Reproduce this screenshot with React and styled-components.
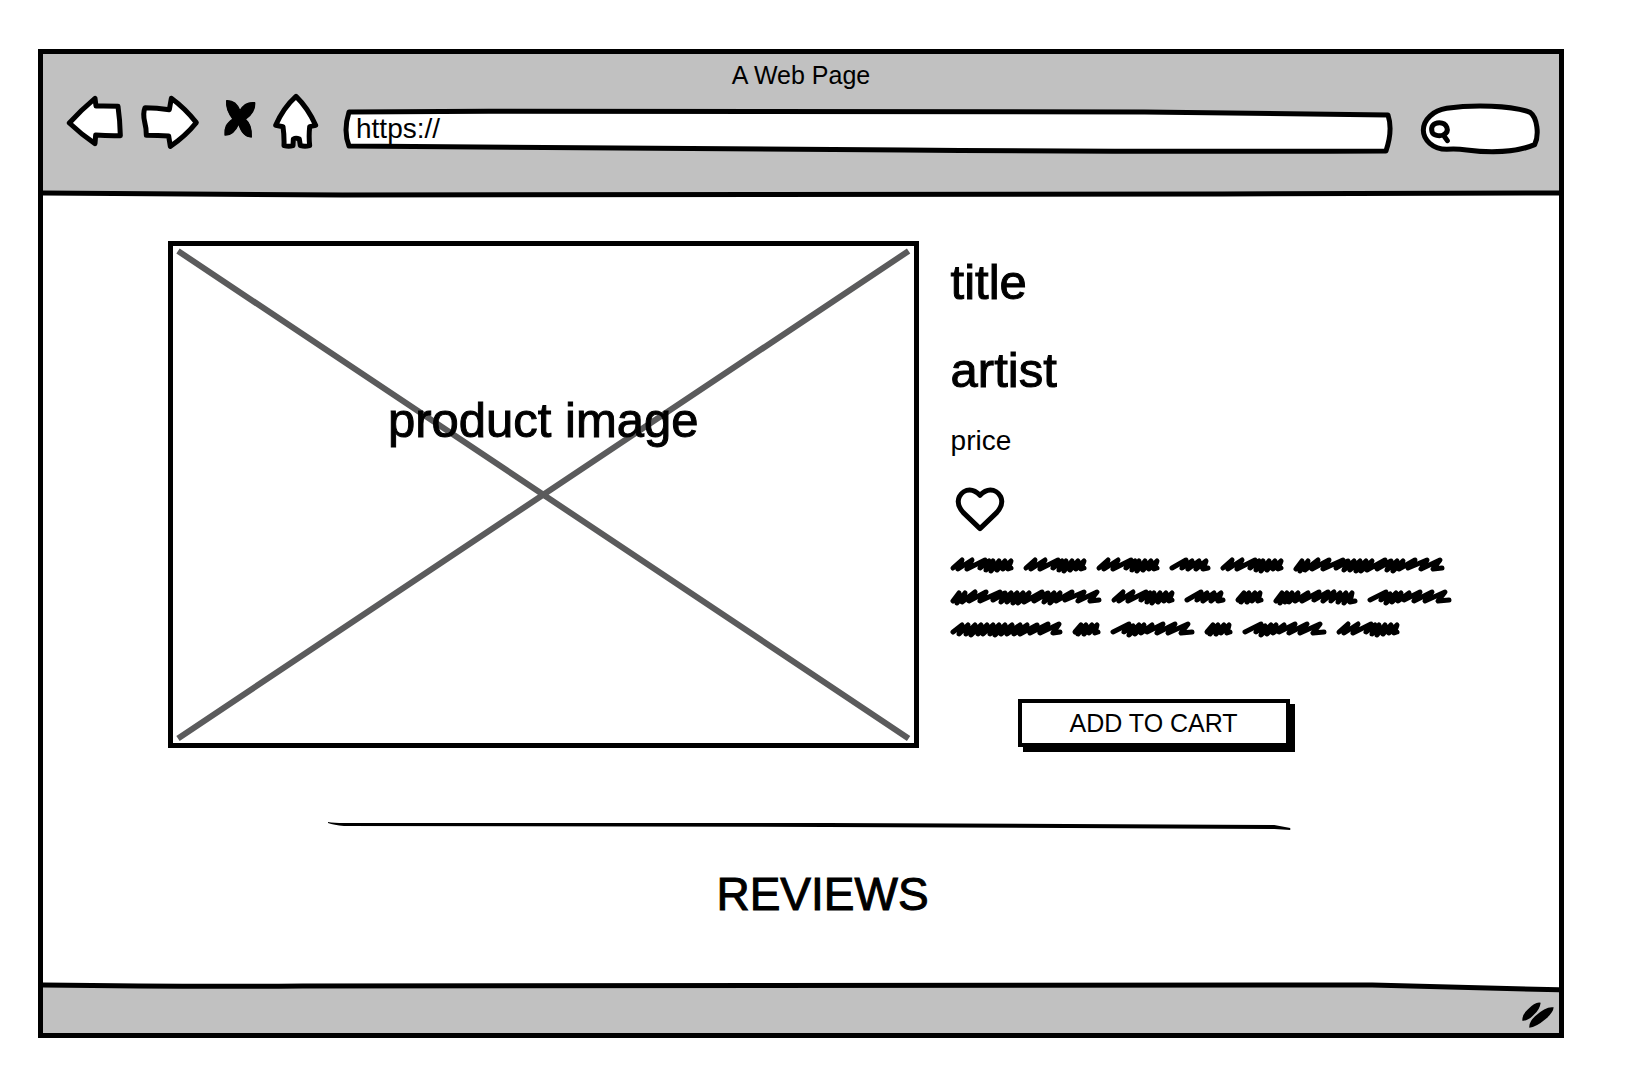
import React from "react";
import styled, { createGlobalStyle } from "styled-components";

const INK = "#000000";
const CHROME = "#c1c1c1";

const GlobalStyle = createGlobalStyle`
  *, *::before, *::after { box-sizing: border-box; }
  body {
    margin: 0;
    background: #ffffff;
    color: ${INK};
    font-family: "Liberation Sans", Arial, sans-serif;
  }
`;

const Page = styled.div`
  display: flex;
  min-height: 100vh;
  padding: 49px 82px 28px 38px;
`;

const BrowserWindow = styled.div`
  display: flex;
  flex: 1;
  flex-direction: column;
  min-width: 0;
  border: 5px solid ${INK};
  background: #ffffff;
`;

const Header = styled.header`
  padding-top: 6px;
  background: ${CHROME};
`;

const WindowTitle = styled.div`
  font-size: 25px;
  line-height: 30px;
  text-align: center;
`;

const Toolbar = styled.div`
  display: flex;
  align-items: flex-end;
  gap: 24px;
  padding: 3px 18px 34px 23px;
`;

const NavButtons = styled.nav`
  display: flex;
  gap: 16px;
  padding-bottom: 5px;
`;

const IconButton = styled.button`
  display: block;
  padding: 0;
  border: 0;
  background: none;
  cursor: pointer;
`;

const Icon = styled.svg`
  display: block;
  fill: ${(p) => p.$fill || "#ffffff"};
  stroke: ${INK};
  stroke-width: ${(p) => p.$weight || 15};
  stroke-linejoin: round;
  stroke-linecap: round;
`;

const AddressField = styled.label`
  position: relative;
  flex: 1;
  min-width: 0;
  height: 46px;
`;

const SearchField = styled.label`
  position: relative;
  width: 120px;
  height: 52px;
  margin-left: 4px;
`;

const Outline = styled.svg`
  position: absolute;
  inset: 0;
  width: 100%;
  height: 100%;
  overflow: visible;
  fill: #ffffff;
  stroke: ${INK};
  stroke-width: 5;
  stroke-linejoin: round;
  path { vector-effect: non-scaling-stroke; }
`;

const TextInput = styled.input`
  position: relative;
  display: block;
  width: 100%;
  height: 40px;
  padding: 0 12px 0 ${(p) => p.$indent}px;
  border: 0;
  outline: 0;
  background: transparent;
  color: ${INK};
  font-family: inherit;
  font-size: 28px;
`;

const Edge = styled.svg`
  display: block;
  width: 100%;
  height: 12px;
  fill: none;
  stroke: ${INK};
  stroke-width: 5;
  path { vector-effect: non-scaling-stroke; }
`;

const Content = styled.main`
  flex: 1;
  padding: 40px 108px 17px 125px;
`;

const Product = styled.section`
  display: grid;
  grid-template-columns: minmax(0, 3fr) minmax(0, 2fr);
  gap: 32px;
  align-items: start;
`;

const ImageFrame = styled.figure`
  display: grid;
  aspect-ratio: 750 / 507;
  margin: 0;
  border: 5px solid ${INK};
`;

const Cross = styled.svg`
  grid-area: 1 / 1;
  width: 100%;
  height: 100%;
  stroke: #5b5b5c;
  stroke-width: 6;
`;

const Caption = styled.figcaption`
  grid-area: 1 / 1;
  padding-top: 146px;
  font-size: 49px;
  line-height: 56px;
  text-align: center;
  -webkit-text-stroke: 1px ${INK};
`;

const Details = styled.div`
  display: flex;
  flex-direction: column;
  align-items: flex-start;
  padding-top: 13px;
`;

const Heading = styled.h1`
  margin: 0 0 32px;
  font-size: 49px;
  font-weight: 400;
  line-height: 56px;
  -webkit-text-stroke: 1px ${INK};
`;

const Artist = styled(Heading).attrs({ as: "h2" })`
  margin-bottom: 28px;
`;

const Price = styled.p`
  margin: 0 0 30px;
  font-size: 28px;
  line-height: 30px;
`;

const LikeButton = styled(IconButton)`
  margin: 0 0 26px 4px;
`;

const Description = styled.div`
  display: flex;
  flex-direction: column;
  gap: 17px;
`;

const ScribbleLine = styled.div`
  display: flex;
  gap: 9px;
`;

const Word = styled.svg`
  display: block;
  overflow: visible;
  fill: none;
  stroke: ${INK};
  stroke-width: 5;
  stroke-linecap: round;
  stroke-linejoin: round;
`;

const CartButton = styled.button`
  width: 272px;
  height: 48px;
  margin: 62px 0 0 67px;
  padding: 0;
  border: 4px solid ${INK};
  background: #ffffff;
  box-shadow: 5px 5px 0 ${INK};
  color: ${INK};
  font-family: inherit;
  font-size: 25px;
  line-height: 30px;
  cursor: pointer;
`;

const Divider = styled.svg`
  display: block;
  width: 75%;
  height: 8px;
  margin: 74px auto 36px;
  fill: ${INK};
`;

const SectionTitle = styled.h2`
  margin: 0;
  padding-left: 26px;
  font-size: 46px;
  font-weight: 400;
  line-height: 56px;
  text-align: center;
  -webkit-text-stroke: 1px ${INK};
`;

const Footer = styled.footer`
  display: flex;
  flex-direction: column;
  align-items: flex-end;
  background: ${CHROME};
`;

const Grip = styled.svg`
  display: block;
  width: 32px;
  height: 28px;
  margin: 7px 5px 4px;
`;

const WORDS = {
  two: [29, "M3 10 9 3 6 12 14 3 12 12 20 3 17 11 25 3 23 11 26 10"],
  three: [42, "M3 10 17 2 13 10 23 3 19 11 30 3 27 11 37 3 34 11 39 10"],
  five: [64, "M3 10 12 2 8 11 22 2 17 11 35 2 30 10 39 3 36 12 43 3 41 13 49 3 47 12 55 3 53 11 61 3 58 11 61 10"],
  seven: [85, "M3 10 19 2 14 10 23 4 19 13 29 3 25 12 34 3 31 11 42 3 37 10 53 2 47 11 65 2 58 11 78 2 71 11 82 10"],
  busy: [85, "M3 11 9 3 7 13 14 3 12 12 19 3 16 12 25 3 22 11 35 3 29 11 46 2 41 10 55 2 50 11 61 2 58 11 67 3 65 12 73 3 71 13 79 3 77 12 82 11"],
  ten: [113, "M3 10 12 3 9 12 18 3 16 12 25 3 21 13 31 3 28 12 37 3 33 12 43 3 40 12 49 3 45 13 55 3 51 12 62 3 57 12 70 3 64 12 77 3 70 12 87 3 80 11 98 2 90 11 109 2 103 11 110 10"],
  twelve: [152, "M3 11 9 3 7 13 15 3 12 12 25 2 19 11 36 2 30 11 50 2 43 10 55 3 51 12 61 3 57 12 67 3 63 13 73 3 68 13 79 3 74 12 92 2 84 11 98 3 94 12 104 3 100 13 110 3 106 11 122 2 115 10 134 2 128 11 147 2 140 11 149 10"],
};

const LINES = [
  ["five", "five", "five", "three", "five", "twelve"],
  ["twelve", "five", "three", "two", "busy", "seven"],
  ["ten", "two", "seven", "two", "seven", "five"],
];

const NAV = [
  {
    label: "Back",
    box: "108 159 174 171",
    width: 58,
    path: "M118 249Q152 211 195 175L198 198Q230 197 264 199Q270 240 271 287Q235 288 197 285L195 311Q155 284 118 249Z",
  },
  {
    label: "Forward",
    box: "330 159 180 171",
    width: 60,
    path: "M345 203Q380 203 418 209L424 175Q465 205 499 248Q465 290 421 319L416 288Q385 286 349 286Q349 264 344 246Q338 220 345 203Z",
  },
];

const Scribble = ({ kind }) => {
  const [width, d] = WORDS[kind];
  return (
    <Word width={width} height="15" viewBox={`1 0 ${width} 15`}>
      <path d={d} />
    </Word>
  );
};

export default function App() {
  return (
    <>
      <GlobalStyle />
      <Page>
        <BrowserWindow>
          <Header>
            <WindowTitle>A Web Page</WindowTitle>
            <Toolbar>
              <NavButtons>
                {NAV.map((item) => (
                  <IconButton key={item.label} aria-label={item.label}>
                    <Icon width={item.width} height="57" viewBox={item.box}>
                      <path d={item.path} />
                    </Icon>
                  </IconButton>
                ))}
                <IconButton aria-label="Stop">
                  <Icon width="40" height="57" viewBox="558 159 120 171" $fill={INK} $weight={4}>
                    <path d="M590 182C606 181 620 188 630 212C641 192 656 186 674 188C675 206 668 222 646 238C662 252 665 268 664 291C645 291 634 278 626 251C614 278 602 286 585 285C584 262 588 252 609 237C594 218 588 203 590 182Z" />
                  </Icon>
                </IconButton>
                <IconButton aria-label="Home">
                  <Icon width="47" height="57" viewBox="726 159 141 171">
                    <path d="M798 169Q834 204 857 256L839 260Q836 289 839 317Q825 320 811 317L808 297Q798 292 790 297L789 317Q777 321 762 317Q763 288 759 260L737 256Q760 203 798 169Z" />
                  </Icon>
                </IconButton>
              </NavButtons>
              <AddressField>
                <Outline viewBox="0 0 1048 46" preserveAspectRatio="none" aria-hidden="true">
                  <path d="M6 3C300 1 620 2 800 3Q920 4 1043 6Q1048 21 1041 42Q780 43 560 41Q260 38 6 37Q0 22 6 3Z" />
                </Outline>
                <TextInput aria-label="Address" defaultValue="https://" $indent={13} />
              </AddressField>
              <SearchField>
                <Outline viewBox="183 192 360 156" aria-hidden="true">
                  <path d="M260 331C218 331 190 302 190 274C190 242 220 214 260 208C340 196 455 199 510 220C532 236 538 288 524 317C470 340 390 342 320 333Q290 329 260 331Z" />
                  <path d="M250 288C272 276 260 251 238 251C220 251 212 263 216 278C220 290 238 292 250 288L262 305" strokeLinecap="round" />
                </Outline>
                <TextInput type="search" aria-label="Search" $indent={32} />
              </SearchField>
            </Toolbar>
            <Edge viewBox="0 0 1517 12" preserveAspectRatio="none">
              <path d="M-8 4Q120 5 300 6L1180 5Q1350 4 1525 4V20H-8Z" fill="#ffffff" />
            </Edge>
          </Header>

          <Content>
            <Product>
              <ImageFrame>
                <Cross viewBox="0 0 740 497" preserveAspectRatio="none" aria-hidden="true">
                  <path d="M5 5 735 492M735 5 5 492" />
                </Cross>
                <Caption>product image</Caption>
              </ImageFrame>
              <Details>
                <Heading>title</Heading>
                <Artist>artist</Artist>
                <Price>price</Price>
                <LikeButton aria-label="Add to favourites">
                  <Icon width="50" height="46" viewBox="0 0 150 138">
                    <path d="M75 128L25 80C-8 42 20 12 44 12Q60 12 75 28Q90 12 106 12C130 12 158 42 125 80Z" />
                  </Icon>
                </LikeButton>
                <Description role="img" aria-label="Product description">
                  {LINES.map((line, row) => (
                    <ScribbleLine key={row}>
                      {line.map((kind, i) => (
                        <Scribble key={i} kind={kind} />
                      ))}
                    </ScribbleLine>
                  ))}
                </Description>
                <CartButton>ADD TO CART</CartButton>
              </Details>
            </Product>
            <Divider viewBox="0 0 966 8" preserveAspectRatio="none" aria-hidden="true">
              <path d="M0 0Q6 1 16 1L500 1L950 3L966 6V8L950 7L500 5L16 4Q6 3 0 1Z" />
            </Divider>
            <SectionTitle>REVIEWS</SectionTitle>
          </Content>

          <Footer>
            <Edge viewBox="0 0 1517 12" preserveAspectRatio="none">
              <path d="M-8 -5V3Q150 5 260 4L1330 3Q1420 5 1525 8V-5Z" fill="#ffffff" />
            </Edge>
            <Grip viewBox="488 123 96 84" aria-hidden="true">
              <path d="M489 182Q488 164 506 148Q528 124 544 128Q542 148 522 166Q504 184 489 182ZM510 203Q508 186 528 168Q560 138 583 142Q582 158 558 178Q530 202 510 203Z" />
            </Grip>
          </Footer>
        </BrowserWindow>
      </Page>
    </>
  );
}
